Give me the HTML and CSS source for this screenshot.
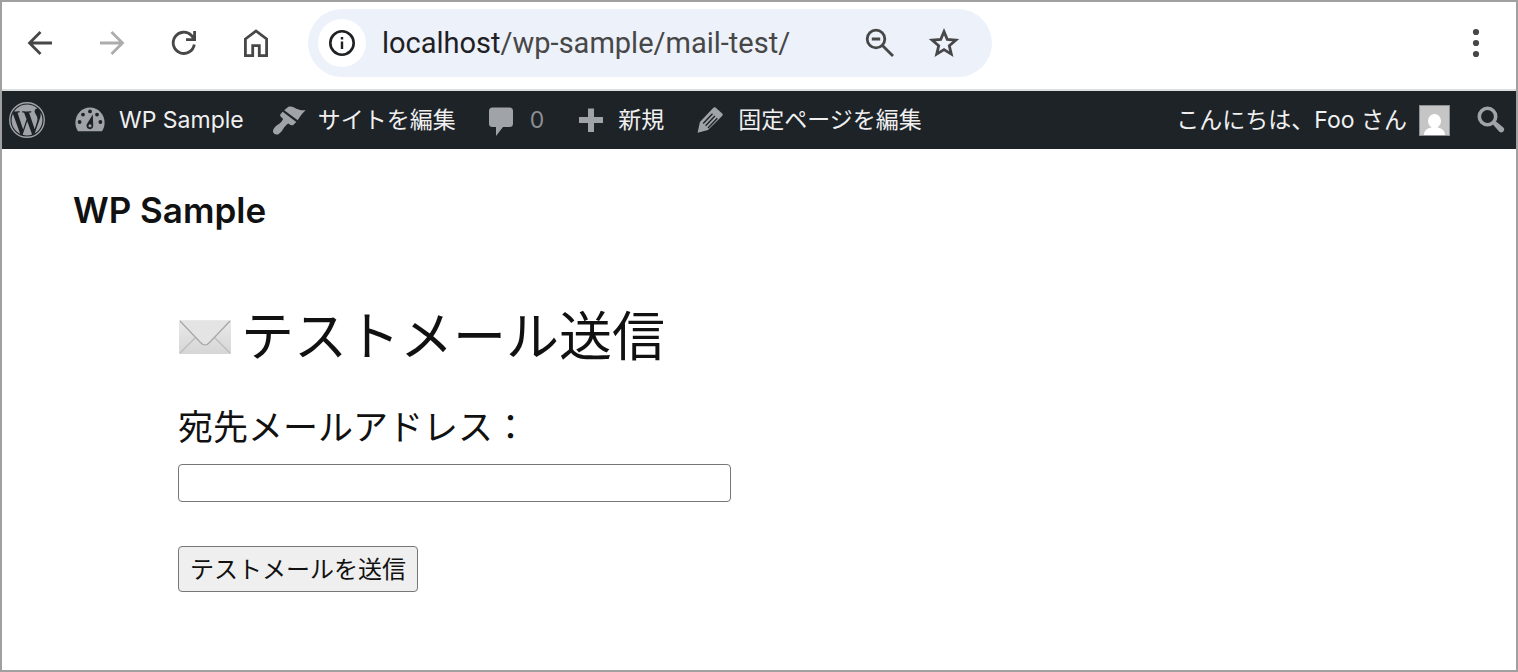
FILE: index.html
```
<!DOCTYPE html>
<html lang="ja">
<head>
    <meta charset="UTF-8">
    <meta name="viewport" content="width=device-width, initial-scale=1.0">
    <title>WP Sample</title>
    <link rel="stylesheet" href="styles.css">
</head>
<body>
    <div class="window">
        <header class="toolbar">
            <button class="tool" type="button" aria-label="戻る">
                <svg width="32" height="32" viewBox="0 0 32 32"><path d="M28 16H5.500M16.500 5L5.500 16l11 11" fill="none" stroke="#474747" stroke-width="2.800"/></svg>
            </button>
            <button class="tool" type="button" aria-label="進む" disabled>
                <svg width="32" height="32" viewBox="0 0 32 32"><path d="M4 16h22.500M15.500 5l11 11-11 11" fill="none" stroke="#acacac" stroke-width="2.800"/></svg>
            </button>
            <button class="tool" type="button" aria-label="再読み込み">
                <svg width="32" height="32" viewBox="0 0 32 32"><path d="M26.300 17.500A10.600 10.600 0 1 1 23.500 8.500L26 11.500M26.600 4v8.600H18" fill="none" stroke="#474747" stroke-width="2.800"/></svg>
            </button>
            <button class="tool" type="button" aria-label="ホーム">
                <svg width="32" height="32" viewBox="0 0 32 32"><path d="M5.400 12L16 4l10.600 8v16.600h-7.300v-10h-6.600v10H5.400z" fill="none" stroke="#474747" stroke-width="2.800"/></svg>
            </button>
            <div class="address">
                <button class="site-info" type="button" aria-label="サイト情報">
                    <svg width="28" height="28" viewBox="0 0 28 28"><circle cx="14" cy="14" r="11.700" fill="none" stroke="#1f2023" stroke-width="2.600"/><path d="M12.800 12.500h2.400v7.500h-2.400zM12.800 8h2.400v2.600h-2.400z" fill="#1f2023"/></svg>
                </button>
                <div class="url" role="textbox" aria-label="アドレス" tabindex="0"><span class="host">localhost</span>/wp-sample/mail-test/</div>
                <button class="address-tool" type="button" aria-label="ズーム">
                    <svg width="32" height="32" viewBox="0 0 32 32"><g fill="none" stroke="#474747" stroke-width="2.800"><circle cx="12" cy="12" r="8.800"/><path d="M18.200 18.200L29 29M7.800 12h8.400"/></g></svg>
                </button>
                <button class="address-tool" type="button" aria-label="ブックマーク">
                    <svg width="32" height="32" viewBox="0 0 32 32"><path d="M16 4.600l3.300 7.900 8.500.7-6.500 5.600 2 8.300-7.300-4.500-7.300 4.500 2-8.300-6.500-5.600 8.500-.7z" fill="none" stroke="#474747" stroke-width="2.800"/></svg>
                </button>
            </div>
            <button class="menu" type="button" aria-label="メニュー">
                <svg width="8" height="30" viewBox="0 0 8 30"><g fill="#474747"><circle cx="4" cy="4" r="3.100"/><circle cx="4" cy="15" r="3.100"/><circle cx="4" cy="26" r="3.100"/></g></svg>
            </button>
        </header>

        <nav class="adminbar">
            <a class="item" href="#" aria-label="WordPress">
                <svg class="icon" viewBox="0 0 122.520 122.520"><circle cx="61.260" cy="61.260" r="58.800" fill="none" stroke="#a0a4a9" stroke-width="4.600"/><path d="M8.708 61.260c0 20.802 12.089 38.779 29.619 47.298L13.258 39.872C10.342 46.408 8.708 53.641 8.708 61.260zM96.740 58.608c0-6.495-2.333-10.993-4.334-14.494-2.664-4.329-5.161-7.995-5.161-12.324 0-4.831 3.664-9.328 8.825-9.328.233 0 .454.029.681.042-9.350-8.566-21.807-13.796-35.489-13.796-18.360 0-34.513 9.420-43.910 23.688 1.233.037 2.395.063 3.382.063 5.497 0 14.006-.667 14.006-.667 2.833-.167 3.167 3.994.337 4.329 0 0-2.847.335-6.015.501L48.200 93.547l11.501-34.493-8.188-22.434c-2.830-.166-5.511-.501-5.511-.501-2.832-.166-2.500-4.496.332-4.329 0 0 8.679.667 13.843.667 5.496 0 14.006-.667 14.006-.667 2.835-.167 3.168 3.994.337 4.329 0 0-2.853.335-6.015.501l18.992 56.494 5.242-17.517C95.011 68.758 96.740 63.425 96.740 58.608zM62.184 65.857l-15.768 45.819c4.708 1.384 9.687 2.141 14.846 2.141 6.120 0 11.989-1.058 17.452-2.979-.141-.225-.269-.464-.374-.724L62.184 65.857zM107.376 36.046c.226 1.674.354 3.471.354 5.404 0 5.333-.996 11.328-3.996 18.824l-16.053 46.413c15.624-9.111 26.133-26.038 26.133-45.426C113.815 52.124 111.481 43.532 107.376 36.046z"/></svg>
            </a>
            <a class="item" href="#">
                <svg class="icon" viewBox="0 0 36 36"><path d="M5 29.200C3.300 27 2.400 24 2.400 20.600 2.400 12.200 8.800 5.400 17 5.400s14.600 6.800 14.600 15.200c0 3.400-.9 6.400-2.600 8.600z"/><g fill="#1d2327"><circle cx="17" cy="9.400" r="1.900"/><circle cx="10" cy="12.600" r="1.900"/><circle cx="24" cy="12.600" r="1.900"/><circle cx="6.600" cy="20" r="1.900"/><circle cx="27.400" cy="20" r="1.900"/><path d="M19.800 12.600l.4 10.600a3.400 3.400 0 1 1-6-1.600z"/></g><circle cx="17" cy="23.800" r="1.500"/></svg>
                <span>WP Sample</span>
            </a>
            <a class="item" href="#">
                <svg class="icon" viewBox="0 0 36 36"><path d="M12.200 8.200l3.900-3.300c1.200-.8 3.900-.6 6 .6 3.500 2 6.500 3.100 11.600 2.800-3.300 3-6 6.600-8 10zM10.700 9.700l13.600 10.400-2.800 2.600c-.9.800-1.900.8-2.900.2l-2.400-1.500c-1.900 1.300-3.700 3.300-4.900 5.300-1.600 2.700-3.500 4.900-5.300 5.700-2 .8-5.400-1-5-3.600.5-3 3-4.900 5.500-6.500 2-1.300 3.600-3.400 4.600-5.400L8.600 14.500c-.6-.9-.6-1.900.2-2.800z"/></svg>
                <span>サイトを編集</span>
            </a>
            <a class="item" href="#">
                <svg class="icon" viewBox="0 0 36 36"><path d="M8.500 5.500h17A3.500 3.500 0 0 1 29 9v12.500a3.500 3.500 0 0 1-3.500 3.500H19l-7 9v-9H8.500A3.500 3.500 0 0 1 5 21.500V9a3.500 3.500 0 0 1 3.500-3.500z"/></svg>
                <span class="count">0</span>
            </a>
            <a class="item" href="#">
                <svg class="icon" viewBox="0 0 36 36"><path d="M16 6.500h6V15h9v6h-9v9h-6v-9H7v-6h9z"/></svg>
                <span>新規</span>
            </a>
            <a class="item" href="#">
                <svg class="icon" viewBox="0 0 36 36"><path d="M23.500 5.500l6.700 6c.7.600.7 1.500.1 2.200L16 28 5.600 30.800 7.900 20 21.400 5.700c.6-.6 1.400-.7 2.100-.2z"/><path d="M11.200 21.500l9.300-9.700M13.600 23.700l9.300-9.700M16 26l9.300-9.700" fill="none" stroke="#1d2327" stroke-width="1.400"/></svg>
                <span>固定ページを編集</span>
            </a>
            <a class="item account" href="#">
                <span>こんにちは、Foo さん</span>
                <svg class="avatar" viewBox="0 0 31 31"><path d="M0 0h31v31H0z" fill="#8c8f94"/><path d="M1 1h29v29H1z" fill="#c5c5c5"/><g fill="#fff"><ellipse cx="15.500" cy="16" rx="6.500" ry="7"/><path d="M5 30c0-4.500 3.500-7 7.500-7.500v-3h6v3c4 .5 7.500 3 7.500 7.500z"/></g></svg>
            </a>
            <a class="item" href="#" aria-label="検索">
                <svg class="icon" viewBox="0 0 36 36"><circle cx="14.500" cy="14.500" r="8.200" fill="none" stroke="#a0a4a9" stroke-width="3.600"/><path d="M19.500 22l3-3 7.800 6.600c2.600 2.400-1 6.500-4 4.200z"/></svg>
            </a>
        </nav>

        <div class="site-title"><a href="#">WP Sample</a></div>

        <main class="content">
            <h1>
                <svg class="mail" viewBox="0 0 53 36">
                    <defs><linearGradient id="paper" x1="0" y1="0" x2="0" y2="1"><stop offset="0" stop-color="#e9e9e9"/><stop offset="1" stop-color="#d6d6d6"/></linearGradient></defs>
                    <path d="M1 1h52v34H1z" fill="url(#paper)"/>
                    <path d="M2 34l16-16M52 34L36 18" fill="none" stroke="#bcbcbc" stroke-width="1.200"/>
                    <path d="M2 2l20 21q5 6 10 0L52 2z" fill="#e4e4e4"/>
                    <path d="M2 2l20 21q5 6 10 0L52 2" fill="none" stroke="#a3a6ab" stroke-width="1.200"/>
                </svg>
                <span>テストメール送信</span>
            </h1>
            <form class="mail-form">
                <label for="email">宛先メールアドレス：</label>
                <input type="email" id="email">
                <button type="button">テストメールを送信</button>
            </form>
        </main>
    </div>
</body>
</html>
```
FILE: styles.css
```
* {
    box-sizing: border-box;
}
body {
    margin: 0;
    font-family: Inter, "Noto Sans CJK JP", sans-serif;
    background-color: #fff;
    color: #111;
}
button {
    font-family: inherit;
    cursor: pointer;
}
svg {
    display: block;
    flex: none;
}
.window {
    min-height: 100vh;
    border: 2px solid #a0a0a0;
}

/* browser toolbar */
.toolbar {
    display: flex;
    align-items: center;
    padding: 7px 36px 12px 2px;
    border-bottom: 2px solid #dcdfdf;
}
.tool,
.address-tool,
.site-info,
.menu {
    display: flex;
    align-items: center;
    justify-content: center;
    flex: none;
    padding: 0;
    border: none;
    background: none;
}
.tool {
    width: 72px;
    height: 68px;
}
.address {
    display: flex;
    align-items: center;
    flex: 0 1 684px;
    height: 68px;
    margin-left: 16px;
    padding: 0 16px 0 10px;
    border-radius: 34px;
    background-color: #ecf1fa;
}
.site-info {
    width: 48px;
    height: 48px;
    border-radius: 50%;
    background-color: #fff;
}
.url {
    flex: 1;
    margin-left: 16px;
    font-family: Roboto, sans-serif;
    font-size: 29px;
    line-height: 40px;
    white-space: nowrap;
    color: #474747;
}
.host {
    color: #1f2023;
}
.address-tool {
    width: 64px;
    height: 64px;
}
.menu {
    margin-left: auto;
}

/* admin bar */
.adminbar {
    display: flex;
    align-items: center;
    gap: 28px;
    height: 58px;
    padding: 0 7px;
    background-color: #1d2327;
    font-size: 23px;
    line-height: 32px;
}
.item {
    display: flex;
    align-items: center;
    gap: 10px;
    color: #f0f0f1;
    text-decoration: none;
    white-space: nowrap;
}
.icon {
    width: 36px;
    height: 36px;
    fill: #a0a4a9;
}
.count {
    color: #8c8f92;
}
.account {
    gap: 12px;
    margin-left: auto;
    margin-right: -5px;
}
.avatar {
    width: 31px;
    height: 31px;
}

/* page */
.site-title {
    padding: 36px 71px;
    font-size: 35px;
    font-weight: 600;
    line-height: 50px;
}
.site-title a {
    color: inherit;
    text-decoration: none;
}
.content {
    max-width: 1290px;
    padding: 36px 176px;
}
h1 {
    display: flex;
    align-items: center;
    gap: 10px;
    margin: 0 0 32px;
    font-size: 53px;
    font-weight: 400;
    line-height: 60px;
}
.mail {
    width: 53px;
    height: 36px;
}
.mail-form {
    display: flex;
    flex-direction: column;
    align-items: flex-start;
}
.mail-form label {
    margin-bottom: 9px;
    font-size: 35px;
    line-height: 56px;
}
.mail-form input {
    width: 100%;
    max-width: 553px;
    height: 38px;
    margin-bottom: 44px;
    padding: 2px 8px;
    border: 1px solid #767676;
    border-radius: 4px;
    font-size: 24px;
}
.mail-form button {
    height: 46px;
    padding: 0 11px 4px;
    border: 1px solid #767676;
    border-radius: 4px;
    background-color: #efefef;
    color: #111;
    font-size: 24px;
}
```
